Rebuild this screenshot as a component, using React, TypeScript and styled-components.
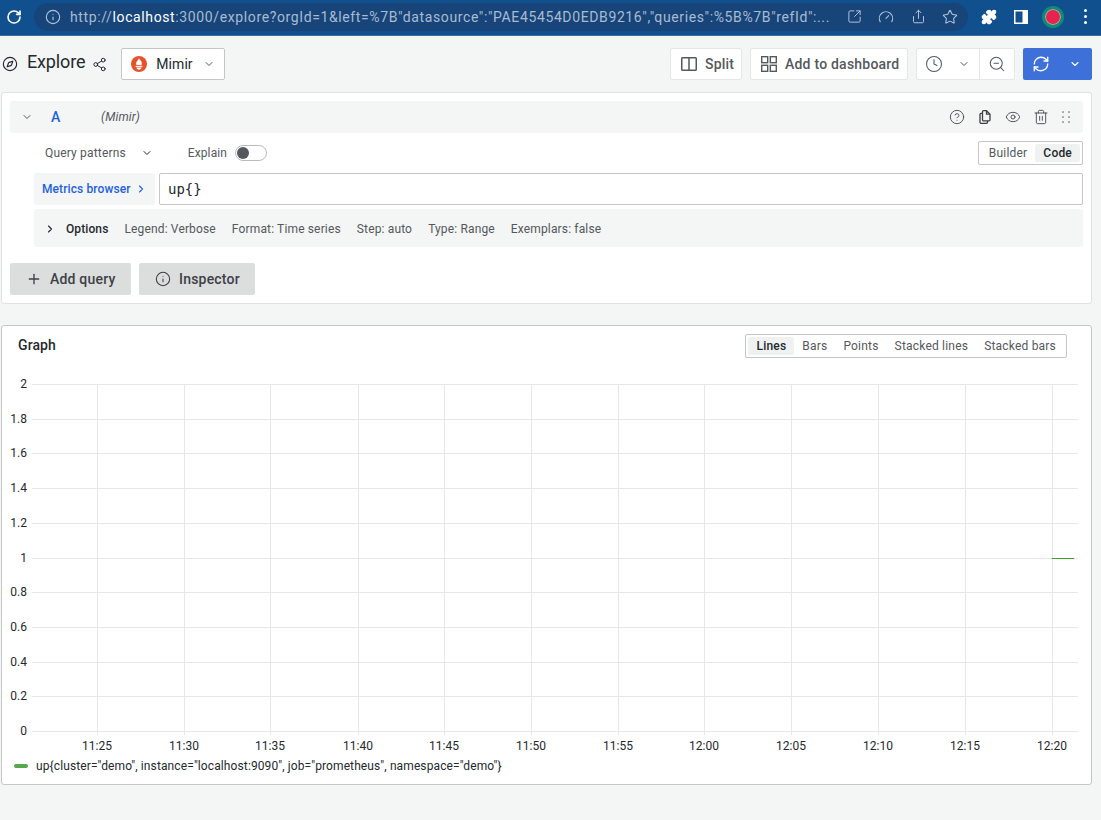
import React from "react";
import styled, { createGlobalStyle } from "styled-components";
import {
  ChevronDown, ChevronRight, Info, Plus, RotateCw, Star, Eye, Share, Puzzle, SquareArrowOutUpRight,
  Gauge, ZoomOut, RefreshCw, Clock, Trash2, CircleHelp, Compass, Share2,
} from "lucide-react";

const Global = createGlobalStyle`
  html, body { margin: 0; padding: 0; background: #f4f5f5; }
  body { font-family: Roboto, "Liberation Sans", sans-serif; color: #24292e; width: 1101px; height: 820px; overflow: hidden; }
  * { box-sizing: border-box; }
`;

const Page = styled.div`display: flex; flex-direction: column; width: 1101px; height: 820px;`;

const BrowserBar = styled.div`
  height: 36px; flex: none; display: flex; align-items: center; background: #11508f;
  border-bottom: 1px solid #3d6ea3; padding: 0 0 2px 6px;
`;
const ReloadSlot = styled.div`width: 28px; flex: none; display: flex; color: #fff;`;
const AddressPill = styled.div`
  width: 934px; flex: none; height: 28px; border-radius: 14px; background: #17457a; display: flex; align-items: center;
  padding: 0 2px 0 11px; color: #b3c2d6;
`;
const Url = styled.div`
  flex: 1; min-width: 0; margin-left: 9px; font-size: 14px; letter-spacing: 0.62px; white-space: nowrap; overflow: hidden; color: #a9bbd1;
  font-family: Roboto, sans-serif;
  b { color: #fff; font-weight: 400; }
`;
const PillIcons = styled.div`
  display: flex; flex: none; align-items: center; margin-left: 8px;
  span { width: 32px; display: flex; justify-content: center; }
`;
const ExtIcons = styled.div`display: flex; flex: none; align-items: center; color: #fff; margin-left: 5px;`;
const ExtSlot = styled.span`width: 32px; display: flex; justify-content: center;`;
const Avatar = styled.div`
  width: 22px; height: 22px; border-radius: 50%; background: #e8214f; border: 3px solid #0f8a76; box-shadow: inset 0 0 0 1px #7cc7a9;
`;
const Dots = styled.div`
  display: flex; flex-direction: column; gap: 3px;
  i { width: 3px; height: 3px; background: #fff; border-radius: 50%; }
`;

const Toolbar = styled.div`height: 56px; flex: none; display: flex; align-items: center; padding: 0 9px 0 2px;`;
const ToolIcon = styled.span`display: inline-flex; color: #24292e;`;
const Title = styled.div`font-size: 18px; margin: -5px 0 0 9px; color: #24292e; letter-spacing: -0.15px;`;
const ShareSlot = styled.span`display: inline-flex; margin: 0 14px 0 7px; color: #24292e;`;
const DsSelect = styled.div`
  width: 104px; height: 32px; background: #fff; border: 1px solid #c4c6c8; border-radius: 2px; display: flex; align-items: center;
  padding-left: 9px; font-size: 14px; color: #24292e;
  span { margin-left: 9px; letter-spacing: 0.05px; }
  svg:last-child { margin-left: 10px; color: #55595e; }
`;
const Spacer = styled.div`flex: 1;`;
const ToolButton = styled.div<{ $w: number }>`
  width: ${(p) => p.$w}px; height: 32px; background: #fff; border: 1px solid #e4e6e7; border-radius: 2px; display: flex; align-items: center;
  padding-left: 9px; gap: 7px; font-size: 14px; font-weight: 500; color: #55585d; margin-left: 8px; letter-spacing: 0.22px;
`;
const TimeGroup = styled.div`
  margin-left: 8px; width: 99px; height: 32px; background: #fff; border: 1px solid #e4e6e7; border-radius: 2px; display: flex; align-items: center; color: #55585d;
`;
const TimeLeft = styled.div`
  width: 63px; height: 100%; border-right: 1px solid #e4e6e7; display: flex; align-items: center; padding-left: 8px; gap: 15px;
`;
const TimeRight = styled.div`flex: 1; display: flex; justify-content: center;`;
const RunButton = styled.div`
  margin-left: 8px; width: 69px; height: 32px; background: #3d71d9; border-radius: 2px; color: #fff; display: flex; align-items: center; padding-left: 9px; gap: 19px;
`;

const Panel = styled.div`
  margin: 0 9px 0 1px; background: #fff; border: 1px solid #dfe1e2; border-radius: 3px;
`;
const QueryPanel = styled(Panel)`height: 212px; padding: 8px 8px 0 8px; flex: none;`;
const QueryHead = styled.div`
  height: 32px; background: #f4f5f5; border-radius: 2px; display: flex; align-items: center; padding: 0 10px 0 11px; color: #55585d;
`;
const Letter = styled.span`font-size: 14px; font-weight: 500; color: #1f62e0; margin-left: 18px; width: 50px;`;
const DsName = styled.span`font-size: 12px; font-style: italic; color: #55585d; letter-spacing: 0.15px;`;
const HeadIcons = styled.div`margin-left: auto; display: flex; align-items: center; gap: 12px; color: #3d4146;`;
const QueryRow = styled.div`display: flex; align-items: center; height: 40px; padding: 0 0 0 35px; font-size: 12px; color: #55585d;`;
const Patterns = styled.span`letter-spacing: 0.17px; margin-right: 15px;`;
const Explain = styled.span`margin-left: 35px; margin-right: 8px; letter-spacing: 0.1px;`;
const Toggle = styled.div`
  width: 32px; height: 16px; border: 1px solid #b9bbbe; border-radius: 8px; display: flex; align-items: center; padding-left: 1px;
  i { width: 12px; height: 12px; border-radius: 50%; background: #55595e; }
`;
const Segment = styled.div`
  margin-left: auto; height: 24px; border: 1px solid #c4c6c8; border-radius: 2px; display: flex; align-items: center; padding: 2px; font-size: 12px;
`;
const SegItem = styled.div<{ $on?: boolean }>`
  height: 18px; line-height: 18px; padding: 0 8px; border-radius: 2px; color: ${(p) => (p.$on ? "#24292e" : "#55585d")};
  background: ${(p) => (p.$on ? "#f0f1f1" : "transparent")}; font-weight: ${(p) => (p.$on ? 500 : 400)}; letter-spacing: 0.2px;
`;
const EditorRow = styled.div`display: flex; gap: 4px; margin-left: 24px;`;
const BrowserBtn = styled.div`
  width: 121px; height: 32px; background: #f4f5f5; border-radius: 2px; color: #1f62e0; display: flex; align-items: center; padding-left: 8px; gap: 4px;
  font-size: 12px; font-weight: 500; white-space: nowrap; letter-spacing: 0.1px;
`;
const Editor = styled.div`
  flex: 1; height: 32px; border: 1px solid #c4c6c8; border-radius: 2px; background: #fff; font-family: "DejaVu Sans Mono", monospace; font-size: 14px; color: #24292e;
  display: flex; align-items: center; padding-left: 8px;
`;
const OptionsRow = styled.div`
  margin: 4px 0 0 24px; height: 38px; background: #f4f5f5; border-radius: 2px; display: flex; align-items: center; padding: 1px 0 0 10px; font-size: 12px; color: #55585d;
  svg { color: #24292e; margin-right: 10px; }
`;
const OptLabel = styled.b`font-weight: 500; color: #24292e; margin-right: 16px; letter-spacing: 0.1px;`;
const OptItem = styled.span`margin-right: 16px; letter-spacing: 0.15px;`;
const Actions = styled.div`display: flex; gap: 8px; margin-top: 16px;`;
const GrayButton = styled.div<{ $w: number }>`
  width: ${(p) => p.$w}px; height: 32px; background: #dcdddd; border-radius: 2px; display: flex; align-items: center; padding-left: 16px; gap: 8px;
  font-size: 14px; font-weight: 500; color: #3d4146; letter-spacing: 0.2px;
  svg { flex: none; }
`;

const GraphPanel = styled(Panel)`margin-top: 21px; height: 460px; flex: none; border-color: #c4c6c8; position: relative;`;
const GraphHead = styled.div`height: 48px; display: flex; padding: 8px 24px 0 16px;`;
const GraphTitle = styled.div`font-size: 14px; font-weight: 500; color: #24292e; margin-top: 3px; letter-spacing: 0.1px;`;
const ChartSvg = styled.svg`display: block; margin: -6px 0 0 -2px;
  text { font-family: Roboto, sans-serif; font-size: 12px; fill: #24292e; }
`;
const Legend = styled.div`display: flex; align-items: center; font-size: 12px; color: #24292e; padding-left: 12px; margin-top: 7px; letter-spacing: 0.11px;`;
const LegendMark = styled.i`width: 14px; height: 4px; border-radius: 2px; background: #56a64b; margin-right: 8px;`;

const yTicks = ["2", "1.8", "1.6", "1.4", "1.2", "1", "0.8", "0.6", "0.4", "0.2", "0"];
const yPos = [384, 419, 453, 488, 523, 558, 592, 627, 662, 696, 731];
const xPos = [97, 184, 270, 358, 444, 531, 618, 704, 791, 878, 965, 1052];
const xLab = ["11:25", "11:30", "11:35", "11:40", "11:45", "11:50", "11:55", "12:00", "12:05", "12:10", "12:15", "12:20"];
const Y0 = 368;

function Prom() {
  return (
    <svg width="16" height="16" viewBox="0 0 16 16">
      <circle cx="8" cy="8" r="8" fill="#e6522c" />
      <path d="M8 2.2c.4 1.6 2.9 2.600 2.900 5.300 0 .6-.2 1.100-.4 1.600H5.500c-.2-.5-.4-1-.4-1.600C5.100 5.500 7 4.500 8 2.200Z" fill="#fff" />
      <rect x="4.600" y="9.800" width="6.800" height="1.100" fill="#fff" />
      <path d="M5.400 11.500h5.200c-.3 1.300-1.300 2.200-2.600 2.200s-2.300-.9-2.600-2.200Z" fill="#fff" />
    </svg>
  );
}

const SplitIcon = () => (
  <svg width="18" height="18" viewBox="0 0 18 18" fill="none" stroke="currentColor" strokeWidth="1.5">
    <rect x="1.750" y="2.750" width="14.500" height="12.500" rx="0.8" />
    <path d="M9 2.750v12.500" />
  </svg>
);
const AppsIcon = () => (
  <svg width="18" height="18" viewBox="0 0 18 18" fill="none" stroke="currentColor" strokeWidth="1.4">
    <rect x="1.700" y="1.700" width="6" height="6" />
    <rect x="10.300" y="1.700" width="6" height="6" />
    <rect x="1.700" y="10.300" width="6" height="6" />
    <rect x="10.300" y="10.300" width="6" height="6" />
  </svg>
);
const DocsIcon = () => (
  <svg width="16" height="16" viewBox="0 0 16 16" fill="none" stroke="currentColor" strokeWidth="1.3" strokeLinejoin="round">
    <path d="M6.500 1.700h3l3.500 3.500v5.600a1 1 0 0 1-1 1H6.500a1 1 0 0 1-1-1V2.700a1 1 0 0 1 1-1Z" />
    <path d="M9.500 1.700v3.500H13" />
    <path d="M5.500 4.300H4a1 1 0 0 0-1 1v8a1 1 0 0 0 1 1h5.500a1 1 0 0 0 1-1V12" />
  </svg>
);
const GripIcon = () => (
  <svg width="12" height="16" viewBox="2 0 12 16" fill="#a6a8ab">
    {[3, 8, 13].map((y) => (
      <g key={y}>
        <rect x="3" y={y - 1} width="2" height="2" rx="0.5" />
        <rect x="9" y={y - 1} width="2" height="2" rx="0.5" />
      </g>
    ))}
  </svg>
);
const PanelIcon = () => (
  <svg width="14" height="14" viewBox="0 0 14 14">
    <path d="M0 0h14v14H0Z" fill="#fff" />
    <path d="M1.500 1.500h7v11h-7Z" fill="#11508f" />
  </svg>
);

export default function App() {
  return (
    <Page>
      <Global />
      <BrowserBar>
        <ReloadSlot><RotateCw size={16} strokeWidth={2.4} /></ReloadSlot>
        <AddressPill>
          <Info size={16} strokeWidth={1.7} />
          <Url>http://<b>localhost</b>:3000/explore?orgId=1&amp;left=%7B"datasource":"PAE45454D0EDB9216","queries":%5B%7B"refId":...</Url>
          <PillIcons>
            <span><SquareArrowOutUpRight size={15} strokeWidth={1.6} /></span>
            <span><Gauge size={16} strokeWidth={1.6} /></span>
            <span><Share size={15} strokeWidth={1.6} /></span>
            <span><Star size={16} strokeWidth={1.6} /></span>
          </PillIcons>
        </AddressPill>
        <ExtIcons>
          <ExtSlot><Puzzle size={16} fill="#fff" /></ExtSlot>
          <ExtSlot><PanelIcon /></ExtSlot>
          <ExtSlot><Avatar /></ExtSlot>
          <ExtSlot><Dots><i /><i /><i /></Dots></ExtSlot>
        </ExtIcons>
      </BrowserBar>

      <Toolbar>
        <ToolIcon><Compass size={16} strokeWidth={1.7} /></ToolIcon>
        <Title>Explore</Title>
        <ShareSlot><Share2 size={15} strokeWidth={1.6} /></ShareSlot>
        <DsSelect><Prom /><span>Mimir</span><ChevronDown size={12} strokeWidth={2} /></DsSelect>
        <Spacer />
        <ToolButton $w={72}><SplitIcon />Split</ToolButton>
        <ToolButton $w={158}><AppsIcon />Add to dashboard</ToolButton>
        <TimeGroup>
          <TimeLeft><Clock size={18} strokeWidth={1.4} /><ChevronDown size={12} strokeWidth={2} /></TimeLeft>
          <TimeRight><ZoomOut size={18} strokeWidth={1.4} /></TimeRight>
        </TimeGroup>
        <RunButton><RefreshCw size={18} strokeWidth={1.7} /><ChevronDown size={12} strokeWidth={2.2} /></RunButton>
      </Toolbar>

      <QueryPanel>
        <QueryHead>
          <ChevronDown size={12} />
          <Letter>A</Letter>
          <DsName>(Mimir)</DsName>
          <HeadIcons>
            <CircleHelp size={16} strokeWidth={1.3} />
            <DocsIcon />
            <Eye size={16} strokeWidth={1.3} />
            <Trash2 size={16} strokeWidth={1.3} />
            <GripIcon />
          </HeadIcons>
        </QueryHead>
        <QueryRow>
          <Patterns>Query patterns</Patterns>
          <ChevronDown size={12} color="#24292e" />
          <Explain>Explain</Explain>
          <Toggle><i /></Toggle>
          <Segment>
            <SegItem>Builder</SegItem>
            <SegItem $on>Code</SegItem>
          </Segment>
        </QueryRow>
        <EditorRow>
          <BrowserBtn>Metrics browser<ChevronRight size={12} strokeWidth={2.2} /></BrowserBtn>
          <Editor>up{"{}"}</Editor>
        </EditorRow>
        <OptionsRow>
          <ChevronRight size={12} strokeWidth={2.2} />
          <OptLabel>Options</OptLabel>
          <OptItem>Legend: Verbose</OptItem>
          <OptItem>Format: Time series</OptItem>
          <OptItem>Step: auto</OptItem>
          <OptItem>Type: Range</OptItem>
          <OptItem>Exemplars: false</OptItem>
        </OptionsRow>
        <Actions>
          <GrayButton $w={121}><Plus size={16} strokeWidth={2} />Add query</GrayButton>
          <GrayButton $w={116}><Info size={16} strokeWidth={1.6} />Inspector</GrayButton>
        </Actions>
      </QueryPanel>

      <GraphPanel>
        <GraphHead>
          <GraphTitle>Graph</GraphTitle>
          <Segment>
            <SegItem $on>Lines</SegItem>
            <SegItem>Bars</SegItem>
            <SegItem>Points</SegItem>
            <SegItem>Stacked lines</SegItem>
            <SegItem>Stacked bars</SegItem>
          </Segment>
        </GraphHead>
        <ChartSvg width={1090} height={384} viewBox={`0 ${Y0} 1090 384`}>
          {yPos.map((y, i) => (
            <g key={y}>
              <line x1={32} x2={1078} y1={y + 0.5} y2={y + 0.5} stroke="#e6e7e8" />
              <text x={27} y={y + 4} textAnchor="end">{yTicks[i]}</text>
            </g>
          ))}
          {xPos.map((x, i) => (
            <g key={x}>
              <line x1={x + 0.5} x2={x + 0.5} y1={384} y2={735} stroke="#e6e7e8" />
              <text x={x} y={750} textAnchor="middle">{xLab[i]}</text>
            </g>
          ))}
          <line x1={1052} x2={1074} y1={558.5} y2={558.5} stroke="#37a02f" />
        </ChartSvg>
        <Legend><LegendMark />up{'{cluster="demo", instance="localhost:9090", job="prometheus", namespace="demo"}'}</Legend>
      </GraphPanel>
    </Page>
  );
}
